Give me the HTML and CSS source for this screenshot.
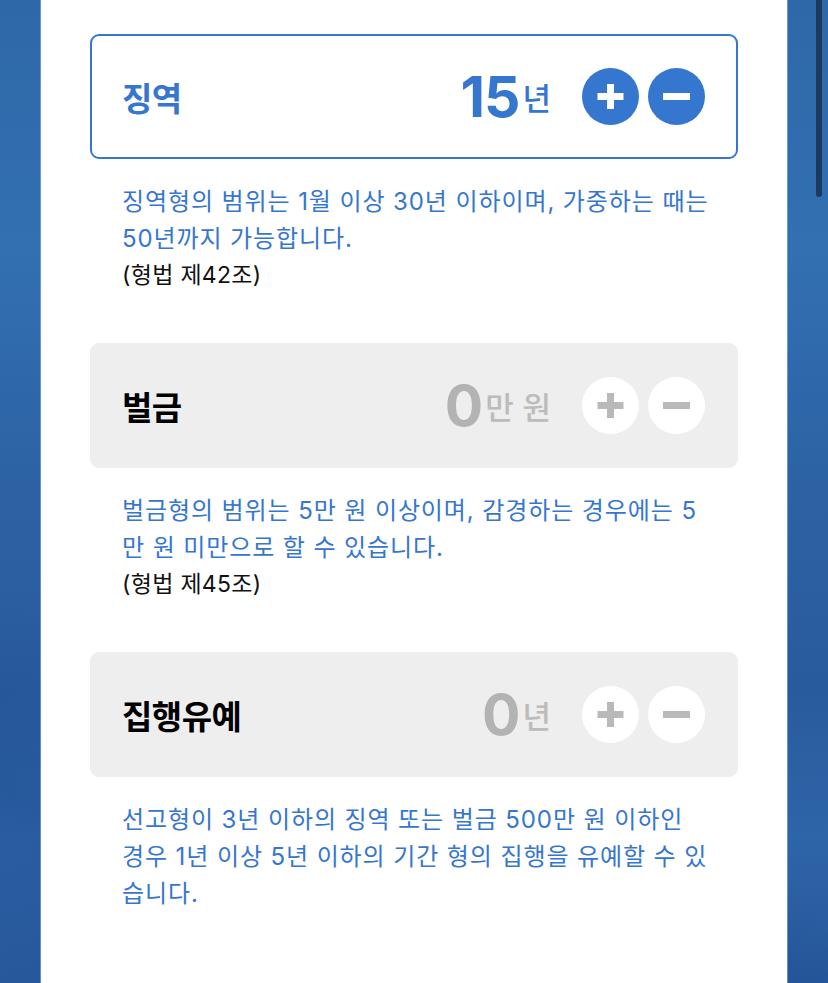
FILE: index.html
```html
<!DOCTYPE html>
<html lang="ko">
<head>
<meta charset="utf-8">
<title>형량 입력</title>
<link rel="stylesheet" href="styles.css">
</head>
<body>
<div class="backdrop">
  <main class="panel">
    <section class="item">
      <div class="card card-active">
        <span class="label">징역</span>
        <div class="value"><span class="num">15</span><span class="unit">년</span></div>
        <div class="controls">
          <button class="btn" aria-label="증가"><svg viewBox="0 0 57 57" width="57" height="57"><rect x="15.5" y="25" width="26" height="7"/><rect x="25" y="16" width="7" height="25"/></svg></button>
          <button class="btn" aria-label="감소"><svg viewBox="0 0 57 57" width="57" height="57"><rect x="15" y="25" width="27" height="7"/></svg></button>
        </div>
      </div>
      <p class="desc">징역형의 범위는 1월 이상 30년 이하이며, 가중하는 때는<br>50년까지 가능합니다.<span class="law">(형법 제42조)</span></p>
    </section>

    <section class="item">
      <div class="card card-idle">
        <span class="label">벌금</span>
        <div class="value"><span class="num">0</span><span class="unit">만 원</span></div>
        <div class="controls">
          <button class="btn" aria-label="증가"><svg viewBox="0 0 57 57" width="57" height="57"><rect x="15.5" y="25" width="26" height="7"/><rect x="25" y="16" width="7" height="25"/></svg></button>
          <button class="btn" aria-label="감소"><svg viewBox="0 0 57 57" width="57" height="57"><rect x="15" y="25" width="27" height="7"/></svg></button>
        </div>
      </div>
      <p class="desc">벌금형의 범위는 5만 원 이상이며, 감경하는 경우에는 5<br>만 원 미만으로 할 수 있습니다.<span class="law">(형법 제45조)</span></p>
    </section>

    <section class="item">
      <div class="card card-idle">
        <span class="label">집행유예</span>
        <div class="value"><span class="num">0</span><span class="unit">년</span></div>
        <div class="controls">
          <button class="btn" aria-label="증가"><svg viewBox="0 0 57 57" width="57" height="57"><rect x="15.5" y="25" width="26" height="7"/><rect x="25" y="16" width="7" height="25"/></svg></button>
          <button class="btn" aria-label="감소"><svg viewBox="0 0 57 57" width="57" height="57"><rect x="15" y="25" width="27" height="7"/></svg></button>
        </div>
      </div>
      <p class="desc">선고형이 3년 이하의 징역 또는 벌금 500만 원 이하인<br>경우 1년 이상 5년 이하의 기간 형의 집행을 유예할 수 있<br>습니다.</p>
    </section>
  </main>
  <div class="scrollbar"></div>
</div>
</body>
</html>
```

FILE: styles.css
```css
html, body {
  margin: 0;
  padding: 0;
  height: 100%;
  overflow: hidden;
}

body {
  font-family: "Noto Sans CJK KR", "Noto Sans", sans-serif;
}

.backdrop {
  position: relative;
  min-height: 100vh;
  display: flex;
  justify-content: center;
  background:
    linear-gradient(200deg, rgba(255,255,255,0) 70%, rgba(20,60,130,0.25) 85%, rgba(255,255,255,0) 100%),
    linear-gradient(180deg, #2f68a8 0%, #3270b2 25%, #2c62a4 50%, #285b9e 70%, #2e65a8 85%, #27589c 100%);
}

.panel {
  width: 746px;
  min-height: 100vh;
  box-sizing: border-box;
  background: #ffffff;
  padding: 34px 49px 0;
  box-shadow: -1px 0 0 rgba(140,180,230,0.6), 1px 0 0 rgba(140,180,230,0.6);
}

.item {
  margin-bottom: 49px;
}

.card {
  height: 125px;
  box-sizing: border-box;
  border-radius: 9px;
  border: 2px solid transparent;
  padding: 0 31px 0 30px;
  display: flex;
  align-items: center;
}

.card-active {
  border-color: #3576cf;
  background: #ffffff;
  color: #3576cf;
}

.card-idle {
  background: #eeeeee;
  color: #000000;
}

.label {
  flex: 1;
  font-size: 33px;
  font-weight: 700;
  letter-spacing: -0.5px;
}

.value {
  display: flex;
  align-items: center;
}

.num {
  font-family: "Inter", "Liberation Sans", sans-serif;
  font-size: 57px;
  font-weight: 700;
  letter-spacing: -1px;
  line-height: 1;
}

.unit {
  font-size: 31px;
  font-weight: 500;
  margin-left: 3px;
  line-height: 1;
}

.card-idle .num { color: #b3b3b3; }
.card-idle .unit { color: #bcbcbc; }

.controls {
  display: flex;
  gap: 9px;
  margin-left: 31px;
}

.btn {
  width: 57px;
  height: 57px;
  border: 0;
  padding: 0;
  border-radius: 50%;
  display: flex;
  align-items: center;
  justify-content: center;
}

.btn svg { display: block; }

.card-active .btn { background: #3576cf; }
.card-active .btn svg { fill: #ffffff; }
.card-idle .btn { background: #ffffff; }
.card-idle .btn svg { fill: #b9b9b9; }

.desc {
  margin: 24px 0 0;
  padding: 0 0 0 32px;
  font-family: "Inter", "Noto Sans CJK KR", sans-serif;
  font-size: 24px;
  letter-spacing: 0.9px;
  line-height: 37px;
  color: #3576cf;
  white-space: nowrap;
}

.law {
  display: block;
  font-size: 23px;
  letter-spacing: 0.3px;
  color: #111111;
}

.scrollbar {
  position: absolute;
  top: 0;
  right: 6px;
  width: 6px;
  height: 197px;
  border-radius: 0 0 3px 3px;
  background: #1c3a5f;
}
```
